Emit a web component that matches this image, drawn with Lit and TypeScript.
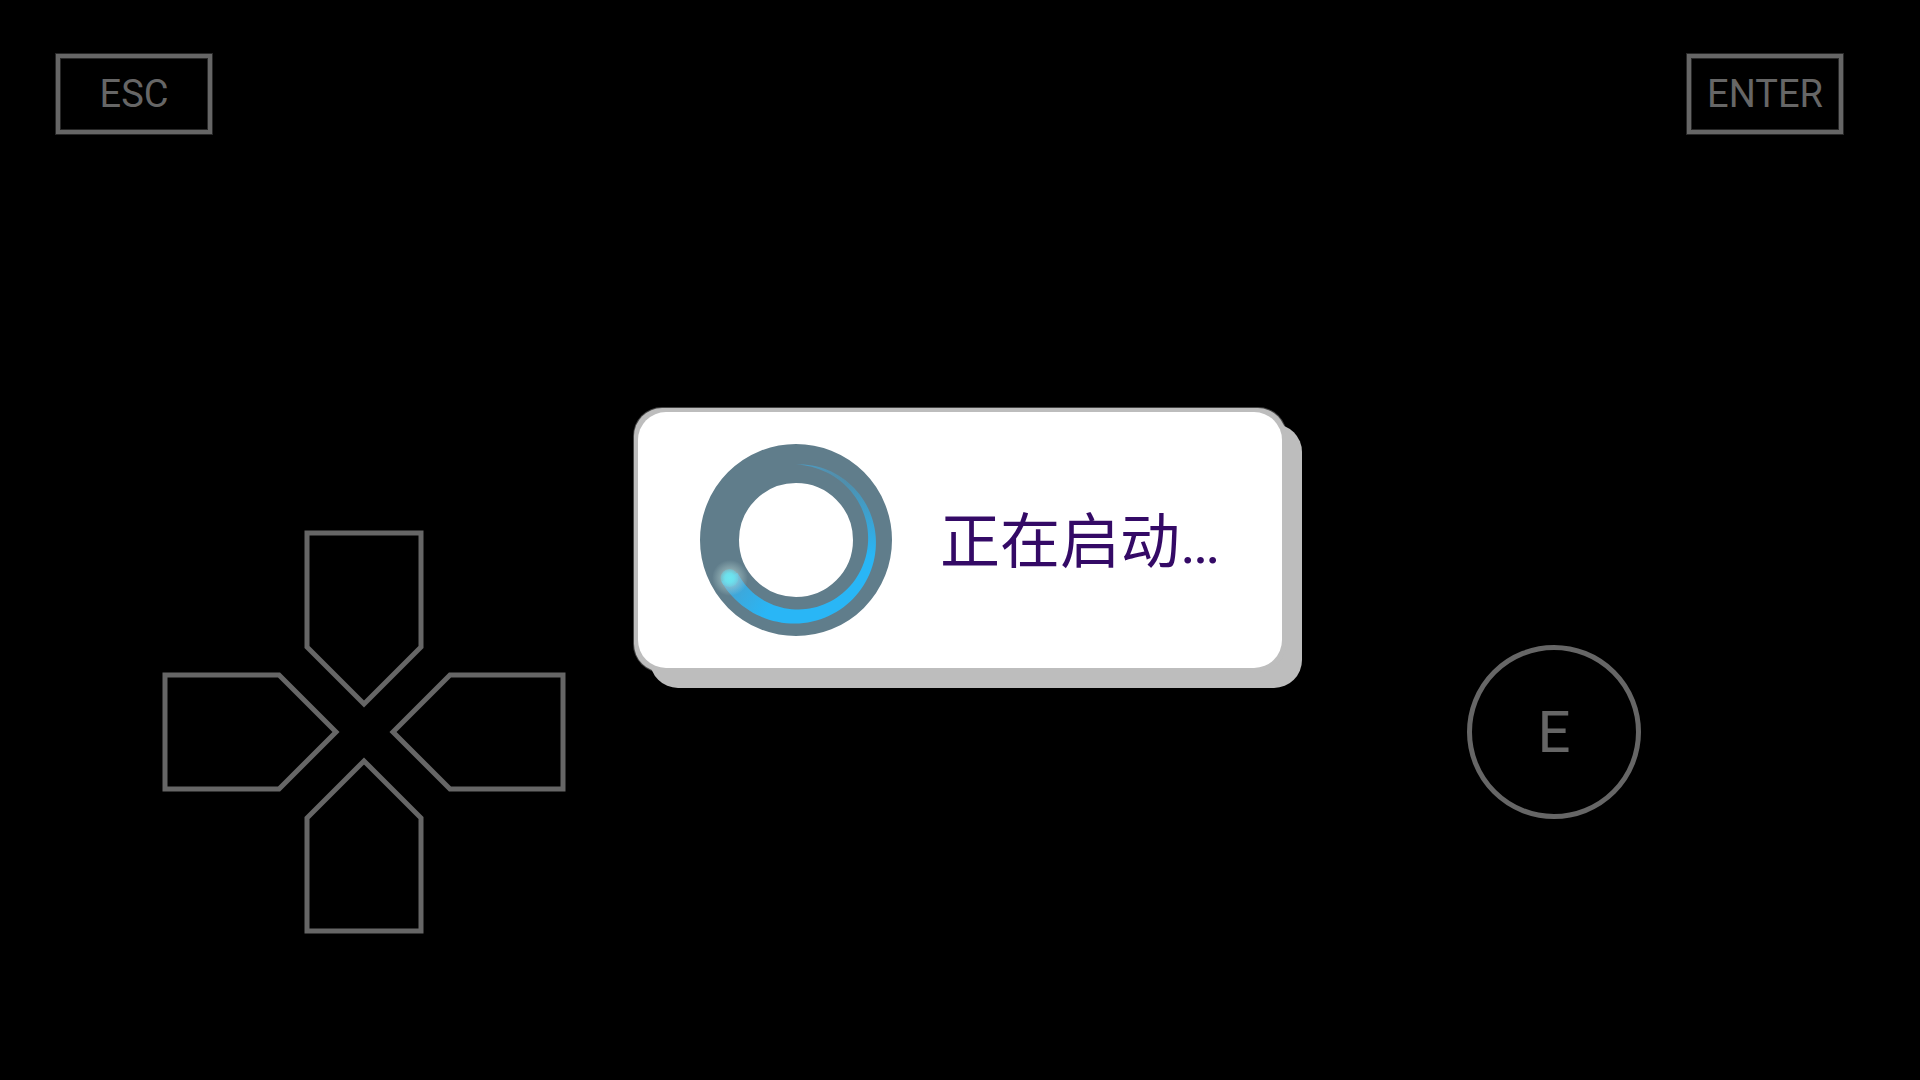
import { LitElement, html, css, svg } from "lit";
import { customElement } from "lit/decorators.js";

const CX = 96;
const CY = 96.5;
const TRACK_RADIUS = 76;

/** Closed outline of the comet trail; angles run clockwise from the top. */
function trailPath(sweep: number, maxWidth: number): string {
  const steps = 80;
  const outer: string[] = [];
  const inner: string[] = [];
  for (let i = 0; i <= steps; i++) {
    const t = i / steps;
    const angle = (t * sweep * Math.PI) / 180;
    const half = (maxWidth * Math.pow(t, 0.85)) / 2;
    const at = (r: number) =>
      `${(CX + r * Math.sin(angle)).toFixed(2)} ${(CY - r * Math.cos(angle)).toFixed(2)}`;
    outer.push(at(TRACK_RADIUS + half));
    inner.unshift(at(TRACK_RADIUS - half));
  }
  return `M${outer.join("L")}L${inner.join("L")}Z`;
}

@customElement("loading-ring")
export class LoadingRing extends LitElement {
  static styles = css`
    :host {
      display: block;
      flex: none;
    }
    .ring {
      display: block;
      width: 192px;
      height: 192px;
    }
  `;

  render() {
    const trail = trailPath(241, 18);
    return html`
      <svg class="ring" viewBox="0 0 192 192" aria-hidden="true">
        ${svg`
          <defs>
            <linearGradient id="tail" gradientUnits="userSpaceOnUse" x1="0" y1="20" x2="0" y2="112">
              <stop offset="0" stop-color="#29b6f6" stop-opacity="0"/>
              <stop offset="0.04" stop-color="#29b6f6" stop-opacity="0.12"/>
              <stop offset="0.3" stop-color="#29b6f6" stop-opacity="0.42"/>
              <stop offset="1" stop-color="#29b6f6"/>
            </linearGradient>
            <linearGradient id="head" gradientUnits="userSpaceOnUse" x1="34" y1="136" x2="72" y2="160">
              <stop offset="0" stop-color="#48a0cc" stop-opacity="0.85"/>
              <stop offset="1" stop-color="#48a0cc" stop-opacity="0"/>
            </linearGradient>
            <radialGradient id="glow">
              <stop offset="0" stop-color="#c4f0ec" stop-opacity="0.7"/>
              <stop offset="0.5" stop-color="#b8d8d6" stop-opacity="0.45"/>
              <stop offset="1" stop-color="#b8d8d6" stop-opacity="0"/>
            </radialGradient>
            <radialGradient id="core">
              <stop offset="0" stop-color="#6ee6f0"/>
              <stop offset="0.5" stop-color="#6ae2ee" stop-opacity="0.95"/>
              <stop offset="1" stop-color="#62d8ea" stop-opacity="0.4"/>
            </radialGradient>
          </defs>
          <circle cx="96" cy="96" r="76.5" fill="none" stroke="#607d8b" stroke-width="39"/>
          <path d=${trail} fill="url(#tail)"/>
          <path d=${trail} fill="url(#head)"/>
          <circle cx="30" cy="134" r="18" fill="url(#glow)"/>
          <circle cx="29.5" cy="134" r="9" fill="url(#core)"/>
        `}
      </svg>
    `;
  }
}

const ARROWS = [
  { name: "up", box: "0 0 120 176", d: "M3 3H117V117L60 174L3 117Z" },
  { name: "left", box: "0 0 176 120", d: "M3 3H117L174 60L117 117H3Z" },
  { name: "right", box: "0 0 176 120", d: "M173 3H60L3 60L60 117H173Z" },
  { name: "down", box: "0 0 120 176", d: "M3 173V60L60 3L117 60V173Z" },
];

@customElement("direction-pad")
export class DirectionPad extends LitElement {
  static styles = css`
    :host {
      display: grid;
      flex: none;
      grid-template-columns: 142px 34px 52px 34px 142px;
      grid-template-rows: 142px 34px 52px 34px 142px;
    }
    .arrow {
      margin: 0;
      padding: 0;
      border: 0;
      background: none;
    }
    .up {
      grid-area: 1 / 2 / 3 / 5;
    }
    .left {
      grid-area: 2 / 1 / 5 / 3;
    }
    .right {
      grid-area: 2 / 4 / 5 / 6;
    }
    .down {
      grid-area: 4 / 2 / 6 / 5;
    }
    .shape {
      display: block;
      width: 100%;
      height: 100%;
      overflow: visible;
      fill: none;
      stroke: #666;
      stroke-width: 5;
    }
  `;

  render() {
    return ARROWS.map(
      (a) => html`
        <button class="arrow ${a.name}" type="button" aria-label=${a.name}>
          <svg class="shape" viewBox=${a.box}><path d=${a.d}></path></svg>
        </button>
      `
    );
  }
}

@customElement("app-root")
export class AppRoot extends LitElement {
  static styles = css`
    :host {
      display: block;
      position: relative;
      min-height: 100vh;
      background: #000;
      font-family: Roboto, "Liberation Sans", sans-serif;
    }
    .pad {
      box-sizing: border-box;
      display: flex;
      flex-direction: column;
      justify-content: space-between;
      min-height: 100vh;
      padding: 54px 77px 146px 56px;
    }
    .row {
      display: flex;
      align-items: center;
      justify-content: space-between;
    }
    .controls {
      padding: 0 202px 0 106px;
    }
    .key {
      box-sizing: border-box;
      width: 156px;
      height: 80px;
      margin: 0;
      padding: 0;
      border: 4px solid #666;
      background: none;
      box-shadow: 0 0 0 1px #282828, inset 0 0 0 1px #282828;
      color: #666;
      font-family: inherit;
      font-size: 38px;
      line-height: 46px;
    }
    .round {
      width: 174px;
      height: 174px;
      border-width: 5px;
      border-radius: 50%;
      box-shadow: none;
      font-size: 58px;
      line-height: 68px;
    }
    .overlay {
      position: absolute;
      inset: 0;
      display: flex;
      align-items: center;
      justify-content: center;
      pointer-events: none;
    }
    .card {
      padding: 4px;
      border-radius: 28px;
      background: #bdbdbd;
      box-shadow: 16px 16px 0 #bdbdbd, 0 0 0 1px #444;
    }
    .body {
      box-sizing: border-box;
      display: flex;
      align-items: center;
      gap: 48px;
      min-width: 644px;
      min-height: 256px;
      padding: 0 62px;
      border-radius: 28px;
      background: #fff;
    }
    .message {
      margin: 0;
      padding-top: 6px;
      color: #340a66;
      font-family: Roboto, "Noto Sans CJK SC", sans-serif;
      font-size: 60px;
      line-height: 72px;
      white-space: nowrap;
    }
  `;

  render() {
    return html`
      <main class="pad">
        <div class="row">
          <button class="key" type="button">ESC</button>
          <button class="key" type="button">ENTER</button>
        </div>
        <div class="row controls">
          <direction-pad></direction-pad>
          <button class="key round" type="button">E</button>
        </div>
      </main>
      <div class="overlay">
        <div class="card" role="status">
          <div class="body">
            <loading-ring></loading-ring>
            <p class="message" lang="zh-CN">正在启动…</p>
          </div>
        </div>
      </div>
    `;
  }
}
